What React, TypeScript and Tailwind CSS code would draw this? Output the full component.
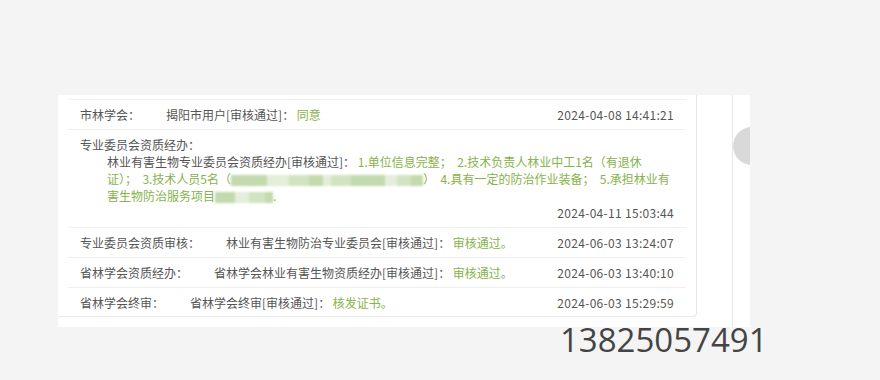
const green = "text-[#86b34a]";

function Redacted({ w }: { w: number[] }) {
  // pixelated blur over hidden names
  return (
    <span className="inline-flex h-[13px] items-center align-middle blur-[1px]">
      {w.map((x, i) => (
        <span
          key={i}
          className={
            i % 3 === 0
              ? "inline-block h-[11px] bg-[#c3d9ae]"
              : i % 3 === 1
              ? "inline-block h-[11px] bg-[#e4eedb]"
              : "inline-block h-[11px] bg-[#d2e3c2]"
          }
          style={{ width: x }}
        />
      ))}
    </span>
  );
}

function Row({
  label,
  who,
  note,
  time,
}: {
  label: string;
  who: string;
  note: string;
  time: string;
}) {
  return (
    <div className="flex items-center justify-between border-t border-[#eeeeee] px-[12px] py-[6px] leading-[17px]">
      <div className="flex">
        <span>{label}</span>
        <span className="ml-[26px]">
          {who} <span className={green}>{note}</span>
        </span>
      </div>
      <span className="tracking-[0.3px]">{time}</span>
    </div>
  );
}

export default function App() {
  return (
    <div
      className="h-[380px] w-[880px] overflow-hidden bg-[#f4f4f4] pl-[58px] pt-[95px] text-[12px] text-[#555555]"
      style={{ fontFamily: '"Noto Sans CJK SC", "Noto Sans", sans-serif' }}
    >
      <div className="flex h-[232px] w-[692px] overflow-hidden bg-white">
        <div className="h-[222px] w-[639px] rounded-br-[4px] border-r border-b border-[#e8e8e8] px-[10px] pt-[4px]">
          <Row label="市林学会：" who="揭阳市用户[审核通过]：" note="同意" time="2024-04-08 14:41:21" />

          <div className="border-t border-[#eeeeee] px-[12px] py-[6px] leading-[17px]">
            <div>专业委员会资质经办：</div>
            <div className="pl-[27px]">
              <div className="whitespace-nowrap">
                林业有害生物专业委员会资质经办[审核通过]：{" "}
                <span className={green}>1.单位信息完整；&nbsp;&nbsp;2.技术负责人林业中工1名（有退休</span>
              </div>
              <div className={`whitespace-nowrap ${green}`}>
                证）；&nbsp;&nbsp;3.技术人员5名（
                <Redacted w={[36, 22, 20, 14, 8, 20, 34, 12, 14, 12]} />
                ）&nbsp;&nbsp;4.具有一定的防治作业装备；&nbsp;&nbsp;5.承担林业有
              </div>
              <div className={`whitespace-nowrap ${green}`}>
                害生物防治服务项目
                <Redacted w={[20, 14, 16, 8]} />.
              </div>
            </div>
            <div className="text-right tracking-[0.3px]">2024-04-11 15:03:44</div>
          </div>

          <Row
            label="专业委员会资质审核："
            who="林业有害生物防治专业委员会[审核通过]："
            note="审核通过。"
            time="2024-06-03 13:24:07"
          />
          <Row
            label="省林学会资质经办："
            who="省林学会林业有害生物资质经办[审核通过]："
            note="审核通过。"
            time="2024-06-03 13:40:10"
          />
          <Row label="省林学会终审：" who="省林学会终审[审核通过]：" note="核发证书。" time="2024-06-03 15:29:59" />
        </div>

        <div className="w-[35px]" />
        <div className="flex-1 overflow-hidden border-l border-[#e8e8e8]">
          <div className="mt-[32px] h-[38px] w-[38px] rounded-full bg-[#d9d9d9]" />
        </div>
      </div>

      <div
        className="-mt-[4px] ml-[502px] text-[33px] leading-none text-[#444444]"
        style={{ fontFamily: '"Open Sans", sans-serif' }}
      >
        13825057491
      </div>
    </div>
  );
}
